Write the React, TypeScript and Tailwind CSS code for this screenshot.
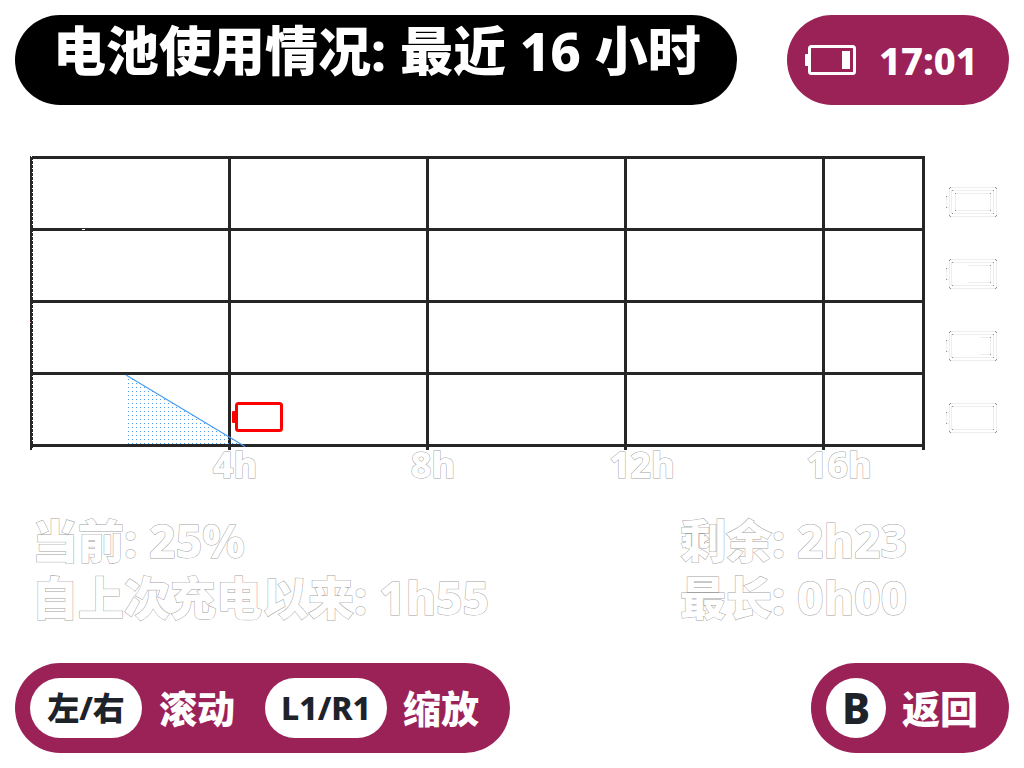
const FONT = "font-['Noto_Sans','Noto_Sans_CJK_SC',sans-serif]";
const OUTLINED = "text-white [-webkit-text-stroke:1px_#a3a3a3] [paint-order:stroke_fill]";

function Battery({ color, bar }: { color: string; bar?: number }) {
  return (
    <g fill={color}>
      <rect x="0" y="9" width="4" height="12" rx="1" />
      <rect x="4.5" y="1.5" width="45" height="27" rx="2" fill="none" stroke={color} strokeWidth="3" />
      {bar ? <rect x={45 - bar} y="6" width={bar} height="18" /> : null}
    </g>
  );
}

function LevelIcon({ start }: { start: number | null }) {
  const corners = [
    [3, 1], [4, 0], [3, 28], [4, 29], [49, 0], [50, 1], [50, 28], [49, 29],
    [6, 3], [47, 3], [6, 26], [47, 26], [0, 9], [0, 20],
  ];
  if (start !== null) {
    corners.push([44, 6], [44, 23]);
    if (start === 9) corners.push([9, 6], [9, 23]);
  }
  return (
    <svg width="52" height="30" viewBox="0 0 52 30" shapeRendering="crispEdges" aria-hidden="true">
      <g fill="none" stroke="#eeeeee">
        <rect x="3.5" y="0.5" width="47" height="29" />
        <rect x="5.5" y="3.5" width="42" height="23" />
        <path d="M3 9.5H.5V20.5H3" />
        {start !== null && <path d={`M${start} 6.5H44.5V23.5H${start}`} />}
        {start === 9 && <path d="M9.5 6.5V23.5" />}
      </g>
      {corners.map(([x, y]) => (
        <rect key={`${x}-${y}`} x={x} y={y} width="1" height="1" fill="#909090" />
      ))}
    </svg>
  );
}

const dots: [number, number][] = [];
for (let x = 98; x < 212; x += 4) {
  for (let y = 223; y <= 287; y += 4) {
    if (y > 219 + ((x - 96) * 71) / 119) dots.push([x, y]);
  }
}

function Chart() {
  return (
    <svg viewBox="0 0 895 332" className="block w-full" role="img" aria-label="电池使用情况">
      <g fill="#262626" shapeRendering="crispEdges">
        {[0, 72, 144, 216, 288].map((y) => (
          <rect key={y} x="2" y={y} width="893" height="3" />
        ))}
        {[198, 396, 594, 792, 892].map((x) => (
          <rect key={x} x={x} y="0" width="3" height="294" />
        ))}
        <rect x="0" y="0" width="2" height="294" />
        <path d="M2.5 1V293" stroke="#262626" strokeDasharray="3 1" />
        <rect x="1" y="0" width="1" height="1" fill="#fff" />
        <rect x="52" y="73" width="3" height="1" fill="#fff" />
        <rect x="0" y="166" width="1" height="1" fill="#f08080" />
      </g>
      <g fill="#4a9df0" shapeRendering="crispEdges">
        {dots.map(([x, y]) => (
          <rect key={`${x}-${y}`} x={x} y={y} width="1" height="1" />
        ))}
      </g>
      <path d="M96 219L215 290.5" stroke="#4a9df0" strokeWidth="1.2" />
      <g transform="translate(202 246)">
        <Battery color="#ff0000" />
      </g>
      <g
        fill="#fff"
        stroke="#a3a3a3"
        strokeWidth="1"
        textAnchor="middle"
        className="text-[36px] font-extrabold [paint-order:stroke_fill]"
      >
        <text x="205" y="322">4h</text>
        <text x="403" y="322">8h</text>
        <text x="612" y="322">12h</text>
        <text x="809" y="322">16h</text>
      </g>
    </svg>
  );
}

export default function App() {
  return (
    <main className={`flex min-h-screen flex-col bg-white p-[15px] font-extrabold text-white ${FONT}`}>
      <header className="flex h-[90px] gap-[50px]">
        <h1 className="min-w-0 flex-1 whitespace-nowrap rounded-full bg-black pl-[38px] text-[53px] leading-[72px]">
          电池使用情况: 最近 16 小时
        </h1>
        <div className="flex w-[222px] shrink-0 items-center gap-[22px] rounded-full bg-[#9b2257] pl-[18px]">
          <svg width="52" height="30" viewBox="0 0 52 30" aria-hidden="true">
            <Battery color="#fff" bar={8} />
          </svg>
          <time className="text-[38px] leading-[48px]">17:01</time>
        </div>
      </header>

      <section className="mt-[51px] flex gap-[21px] pl-[15px] pr-[11px]">
        <div className="min-w-0 flex-1">
          <Chart />
        </div>
        <div className="flex w-[52px] flex-col gap-[42px] pt-[31px]">
          <LevelIcon start={9} />
          <LevelIcon start={22} />
          <LevelIcon start={34} />
          <LevelIcon start={null} />
        </div>
      </section>

      <section className={`mt-6 flex justify-between pl-[17px] text-[46px] leading-[57px] ${OUTLINED}`}>
        <div>
          <p>当前: 25%</p>
          <p>自上次充电以来: 1h55</p>
        </div>
        <div className="w-[329px]">
          <p>剩余: 2h23</p>
          <p>最长: 0h00</p>
        </div>
      </section>

      <footer className="mt-auto flex justify-between text-[38px] leading-[60px]">
        <div className="flex h-[90px] w-[495px] items-center rounded-full bg-[#9b2257] pl-[15px]">
          <button type="button" className="mr-[17px] h-[60px] w-[112px] rounded-full bg-white text-[32px] text-[#1e2329]">
            左/右
          </button>
          <span className="w-[106px]">滚动</span>
          <button type="button" className="mr-[16px] h-[60px] w-[122px] rounded-full bg-white text-[32px] text-[#1e2329]">
            L1/R1
          </button>
          <span>缩放</span>
        </div>
        <div className="flex h-[90px] w-[198px] items-center gap-[16px] rounded-full bg-[#9b2257] pl-[15px]">
          <button type="button" className="h-[60px] w-[60px] rounded-full bg-white text-[42px] text-[#1e2329]">
            B
          </button>
          <span>返回</span>
        </div>
      </footer>
    </main>
  );
}
